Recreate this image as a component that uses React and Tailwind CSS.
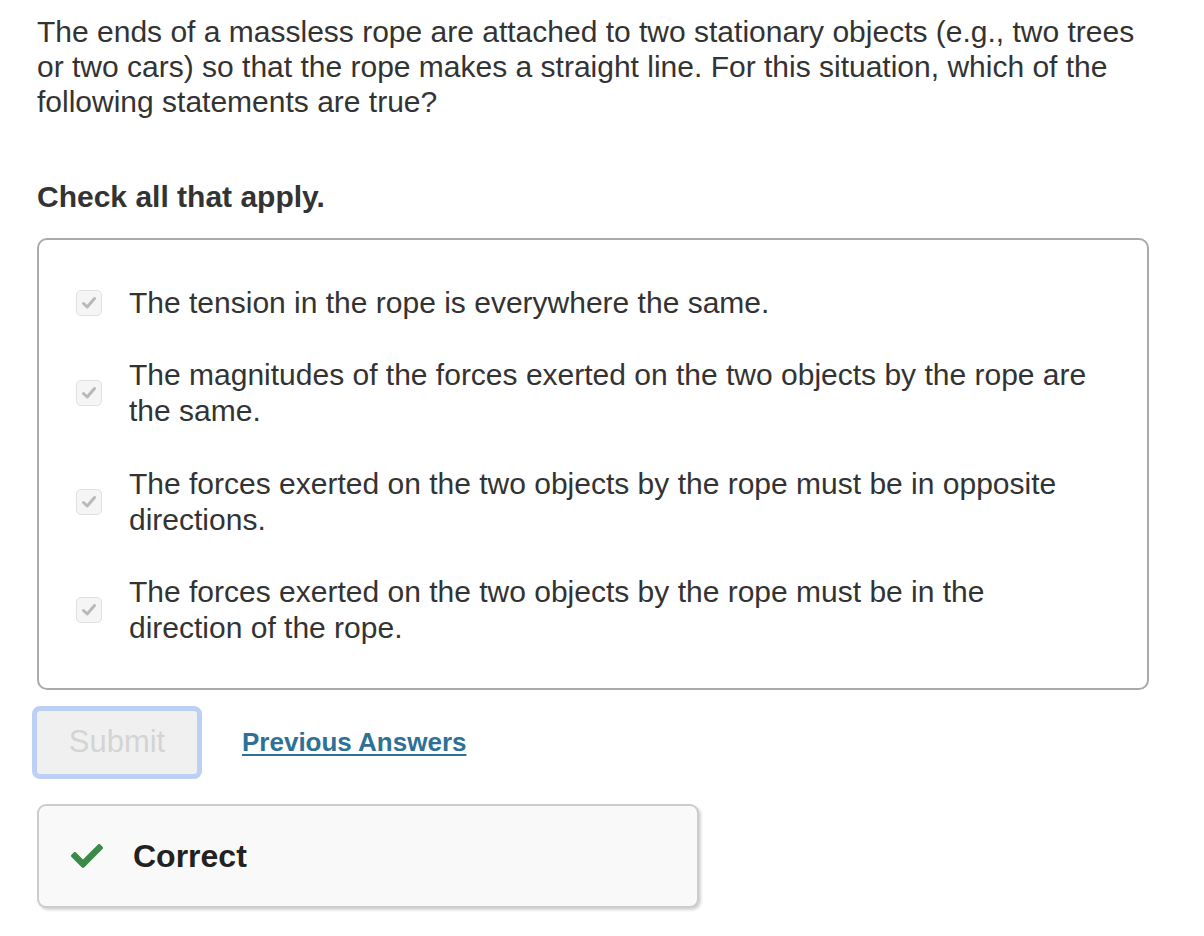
import { FaCheck } from 'react-icons/fa';

const options = [
  'The tension in the rope is everywhere the same.',
  'The magnitudes of the forces exerted on the two objects by the rope are the same.',
  'The forces exerted on the two objects by the rope must be in opposite directions.',
  'The forces exerted on the two objects by the rope must be in the direction of the rope.',
];

function Box() {
  return (
    <span className="flex h-[26px] w-[26px] shrink-0 items-center justify-center rounded-[5px] border border-[#e0e0e0] bg-[#f5f5f5]">
      <svg width="16" height="14" viewBox="0 0 16 14" fill="none">
        <path d="M2.5 7.5 L6.2 11 L13.5 2.5" stroke="#b9b9b9" strokeWidth="3" strokeLinecap="round" strokeLinejoin="round" />
      </svg>
    </span>
  );
}

export default function App() {
  return (
    <div className="min-h-[936px] bg-white px-[37px] pt-[14px] text-[#333] font-['Liberation_Sans',Arial,sans-serif]">
      <p className="max-w-[1110px] text-[30px] leading-[35px]">
        The ends of a massless rope are attached to two stationary objects (e.g., two trees or two cars) so that the rope makes a straight line. For this situation, which of the following statements are true?
      </p>

      <p className="mt-[60px] text-[30px] font-bold leading-[35px]">Check all that apply.</p>

      <div className="mt-[24px] w-[1112px] rounded-[10px] border-2 border-[#aaa] px-[37px] pt-[45px] pb-[42px]">
        <ul className="flex flex-col gap-[36.4px]">
          {options.map((o) => (
            <li key={o} className="flex items-center gap-[27px]">
              <Box />
              <span className="max-w-[960px] text-[30px] leading-[36px]">{o}</span>
            </li>
          ))}
        </ul>
      </div>

      <div className="mt-[16px] flex items-center gap-[40px] -ml-[5px]">
        <button
          type="button"
          disabled
          className="h-[73px] w-[170px] rounded-[8px] border-[5px] border-[#bcd0f6] bg-[#f0f0f0] text-[31px] text-[#d4d4d4]"
        >
          Submit
        </button>
        <a href="#" className="text-[26px] font-bold text-[#2f7196] underline underline-offset-[3px]">
          Previous Answers
        </a>
      </div>

      <div className="mt-[25px] flex h-[104px] w-[662px] items-center gap-[30px] rounded-[9px] border-2 border-[#ccc] bg-[#f9f9f9] pl-[32px] shadow-[2px_2px_3px_rgba(0,0,0,0.18)]">
        <FaCheck className="text-[#3c8a46]" size={32} />
        <span className="text-[32px] font-bold text-[#222]">Correct</span>
      </div>
    </div>
  );
}
